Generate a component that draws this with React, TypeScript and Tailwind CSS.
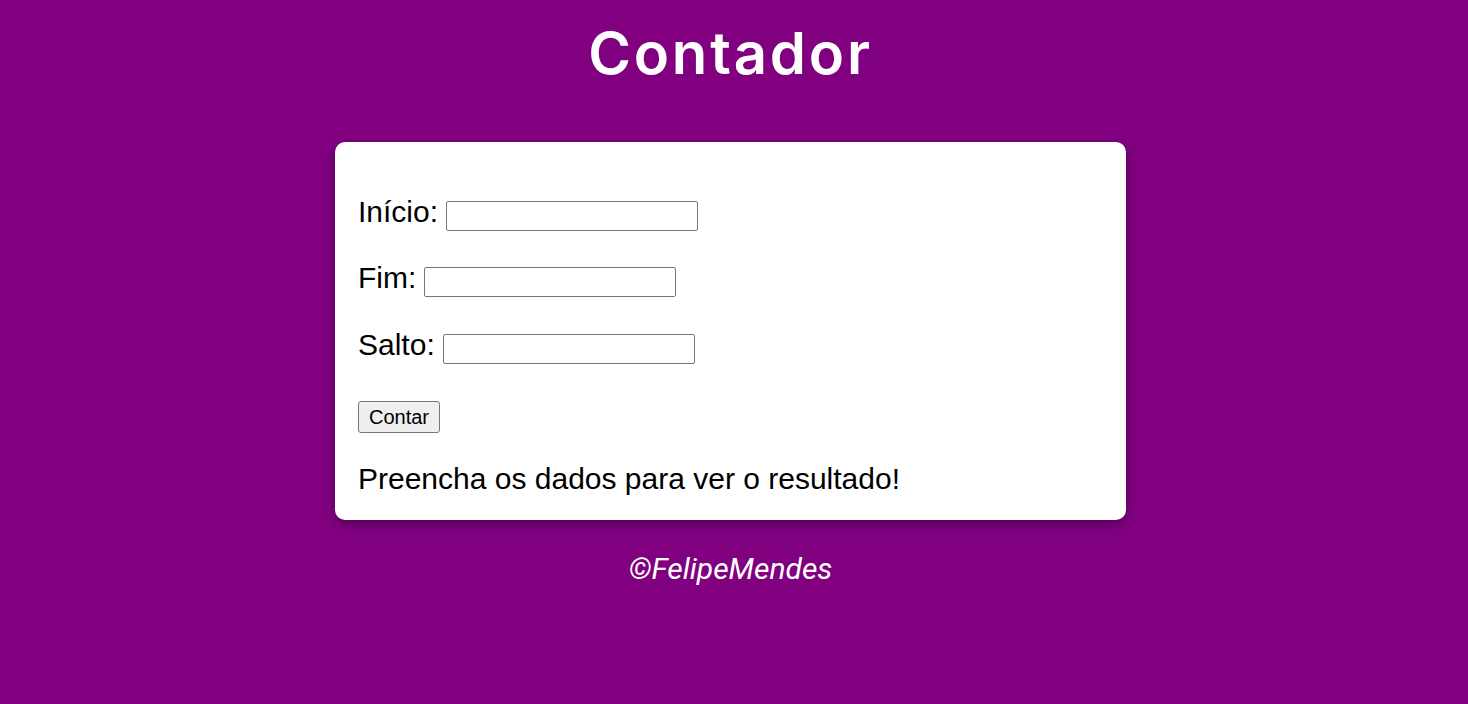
import { useState } from 'react';

export default function App() {
  const [inicio, setInicio] = useState('');
  const [fim, setFim] = useState('');
  const [salto, setSalto] = useState('');
  const [resultado, setResultado] = useState('Preencha os dados para ver o resultado!');

  const contar = () => {
    const i = Number(inicio);
    const f = Number(fim);
    const p = Number(salto) || 1;
    if (!inicio || !fim) {
      setResultado('Preencha os dados para ver o resultado!');
      return;
    }
    const out: number[] = [];
    if (i <= f) for (let c = i; c <= f && out.length < 200; c += p) out.push(c);
    else for (let c = i; c >= f && out.length < 200; c -= p) out.push(c);
    setResultado(out.join(' 👉 ') + ' 🏁');
  };

  const inputCls =
    'w-[252px] h-[30px] border border-[#767676] rounded-[2px] bg-white px-[3px] text-[16px] outline-none';

  return (
    <div className="min-h-screen bg-[#800080] flex flex-col items-center pr-[7px] font-['Liberation_Sans',Arial,sans-serif]">
      <h1 className="mt-[20px] text-white text-[58px] leading-[66px] font-semibold tracking-[2.8px] font-['Inter',sans-serif]">
        Contador
      </h1>

      <div className="mt-[56px] w-[791px] bg-white rounded-[10px] shadow-[0_4px_10px_rgba(0,0,0,0.35)] pl-[23px] pr-[23px] pt-[57px] pb-[24px] flex flex-col text-black">
        <div className="flex items-center h-[34px] text-[30px]">
          <span className="mb-[10px] mr-[8px]">Início:</span>
          <input className={inputCls} value={inicio} onChange={(e) => setInicio(e.target.value)} />
        </div>
        <div className="flex items-center h-[34px] text-[30px] mt-[32px]">
          <span className="mb-[10px] mr-[8px]">Fim:</span>
          <input className={inputCls} value={fim} onChange={(e) => setFim(e.target.value)} />
        </div>
        <div className="flex items-center h-[34px] text-[30px] mt-[33px]">
          <span className="mb-[10px] mr-[8px]">Salto:</span>
          <input className={inputCls} value={salto} onChange={(e) => setSalto(e.target.value)} />
        </div>
        <div className="mt-[35px] flex">
          <button
            onClick={contar}
            className="h-[32px] px-[10px] bg-[#efefef] border border-[#767676] rounded-[3px] text-[20px] leading-none text-black"
          >
            Contar
          </button>
        </div>
        <p className="mt-[29px] text-[30px] leading-[34px]">{resultado}</p>
      </div>

      <p className="mt-[26px] text-white italic text-[30px] font-['Roboto',sans-serif]">©FelipeMendes</p>
    </div>
  );
}
